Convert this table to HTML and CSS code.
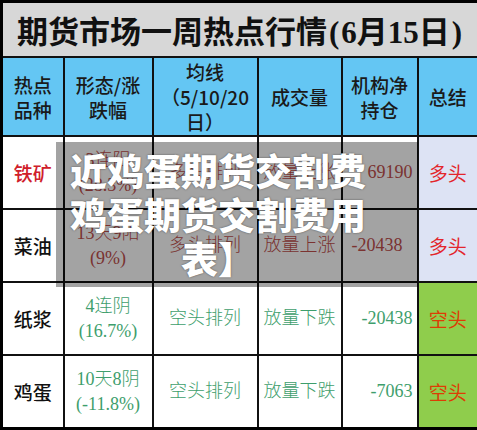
FILE: index.html
```html
<!DOCTYPE html>
<html lang="zh-CN">
<head>
    <meta charset="UTF-8">
    <title>期货市场一周热点行情</title>
    <link rel="stylesheet" href="styles.css">
</head>
<body>
    <div class="sheet">
        <table class="grid">
            <colgroup>
                <col class="c1"><col class="c2"><col class="c3"><col class="c4"><col class="c5"><col class="c6">
            </colgroup>
            <tr class="title-row">
                <td colspan="6">期货市场一周热点行情<span class="paren">(</span>6月15日<span class="paren">)</span></td>
            </tr>
            <tr class="head-row">
                <th>热点<br>品种</th>
                <th>形态/涨<br>跌幅</th>
                <th>均线<br>（5/10/20<br>日）</th>
                <th>成交量</th>
                <th>机构净<br>持仓</th>
                <th>总结</th>
            </tr>
            <tr class="row bull">
                <td class="name red">铁矿</td>
                <td>3连阳<br>(28.3%)</td>
                <td>多头排列</td>
                <td>放量上涨</td>
                <td class="num">69190</td>
                <td class="sum long">多头</td>
            </tr>
            <tr class="row bull">
                <td class="name">菜油</td>
                <td>13天9阳<br>(9%)</td>
                <td>多头排列</td>
                <td>放量上涨</td>
                <td class="num mid">-20438</td>
                <td class="sum long">多头</td>
            </tr>
            <tr class="row bear">
                <td class="name">纸浆</td>
                <td>4连阴<br>(16.7%)</td>
                <td>空头排列</td>
                <td>放量下跌</td>
                <td class="num">-20438</td>
                <td class="sum short">空头</td>
            </tr>
            <tr class="row bear">
                <td class="name">鸡蛋</td>
                <td>10天8阴<br>(-11.8%)</td>
                <td>空头排列</td>
                <td>放量下跌</td>
                <td class="num">-7063</td>
                <td class="sum short">空头</td>
            </tr>
        </table>

        <div class="overlay">
            <div class="overlay-text">近鸡蛋期货交割费<br>鸡蛋期货交割费用<br>表】</div>
        </div>
    </div>
</body>
</html>
```

FILE: styles.css
```css
body {
    margin: 0;
    background: #fff;
    font-family: "Liberation Serif", "Noto Sans CJK SC", serif;
}

.sheet {
    position: relative;
    width: 477px;
    height: 430px;
    overflow: hidden;
}

.grid {
    border-collapse: collapse;
    table-layout: fixed;
    width: 477px;
    border: 3px solid #000;
}

.c1 { width: 62px; }
.c2 { width: 89px; }
.c3 { width: 105px; }
.c4 { width: 84px; }
.c5 { width: 76px; }
.c6 { width: 61px; }

.grid td,
.grid th {
    border: 2px solid #111;
    padding: 0;
    text-align: center;
    vertical-align: middle;
}

.title-row td {
    height: 53px;
    background: #d7d7d7;
    text-align: left;
    padding-left: 14px;
    font-family: "Liberation Serif", "Noto Sans CJK SC", serif;
    font-size: 31px;
    font-weight: 700;
    color: #111;
    white-space: nowrap;
}

.title-row .paren {
    padding: 0 2px;
}

.head-row th {
    height: 77px;
    background: #64c6f3;
    font-family: "Noto Sans CJK SC", sans-serif;
    font-size: 19px;
    font-weight: 500;
    line-height: 25px;
    color: #1a1a1a;
}

.row td {
    height: 71px;
    font-size: 18px;
    line-height: 25px;
    font-weight: 300;
}

.row .name {
    font-family: "Noto Sans CJK SC", sans-serif;
    font-size: 19px;
    font-weight: 500;
    color: #111;
}

.row .name.red {
    color: #d0202a;
}

.bull td {
    color: #c0504d;
}

.bear td {
    color: #3e9e6c;
}

.row .num {
    text-align: right;
    padding-right: 4px;
}

.row .num.mid {
    padding-right: 14px;
}

.row .sum {
    font-family: "Noto Sans CJK SC", sans-serif;
    font-size: 19px;
    font-weight: 400;
}

.sum.long {
    background: #dde3f4;
    color: #e3262c;
}

.sum.short {
    background: #8fcd4c;
    color: #dd3d05;
}

.overlay {
    position: absolute;
    left: 56px;
    top: 142px;
    width: 362px;
    height: 145px;
    background: rgba(0, 0, 0, 0.36);
}

.overlay-text {
    width: 296px;
    margin-left: 14px;
    padding-top: 6px;
    text-align: center;
    font-family: "Noto Sans CJK SC", sans-serif;
    font-size: 37px;
    font-weight: 900;
    line-height: 44px;
    color: #fff;
    text-shadow: 0 0 2px rgba(0, 0, 0, 0.55);
    white-space: nowrap;
}
```
